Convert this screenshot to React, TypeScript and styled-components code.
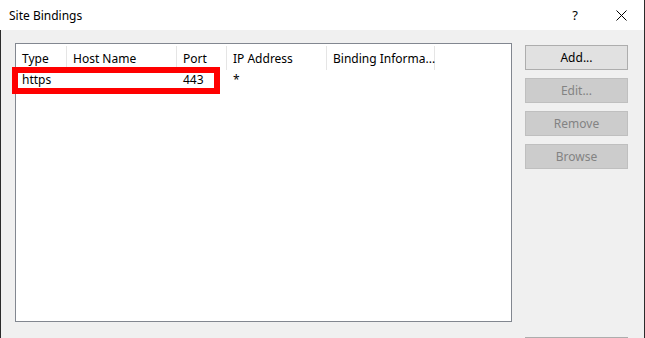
import React from 'react';
import styled, { createGlobalStyle } from 'styled-components';

const GlobalStyle = createGlobalStyle`
  html, body {
    margin: 0;
    padding: 0;
    background: #f0f0f0;
  }
  body {
    font-family: "Noto Sans", "Open Sans", sans-serif;
    font-size: 12px;
    color: #000;
  }
`;

const Window = styled('div')`
  display: flex;
  flex-direction: column;
  width: 644px;
  height: 338px;
  border-right: 1px solid #2b2b2b;
  overflow: hidden;
  background-color: #f0f0f0;
`;

const TitleBar = styled('header')`
  display: flex;
  align-items: center;
  flex: 0 0 30px;
  padding-left: 9px;
  background-color: white;
`;

const Title = styled('span')`
  flex: 1;
  font-size: 12px;
`;

const TitleButton = styled('div')`
  display: flex;
  align-items: center;
  justify-content: center;
  width: 46px;
  height: 30px;
  font-size: 13px;
`;

const Body = styled('section')`
  display: flex;
  align-items: flex-start;
  gap: 13px;
  flex: 1;
  padding: 13px 15px 0 14px;
  border-left: 1px solid #2b2b2b;
`;

const ListBox = styled('div')`
  width: 495px;
  height: 277px;
  flex: 0 0 auto;
  border: 1px solid #828790;
  background-color: white;
`;

const HeaderRow = styled('div')`
  display: flex;
  height: 26px;
`;

const HeaderCell = styled('div')<{ w: number }>`
  display: flex;
  align-items: center;
  box-sizing: border-box;
  width: ${p => p.w}px;
  height: 24px;
  margin-top: 2px;
  padding-left: 6px;
  border-right: 1px solid #e5e5e5;
  white-space: nowrap;
`;

const Row = styled('div')`
  position: relative;
  display: flex;
  height: 17px;
  margin-top: 1px;
`;

const Cell = styled('div')<{ w: number }>`
  display: flex;
  align-items: center;
  box-sizing: border-box;
  width: ${p => p.w}px;
  padding-left: 6px;
  white-space: nowrap;
`;

const Highlight = styled('div')`
  position: absolute;
  left: -4px;
  top: -4px;
  width: 208px;
  height: 27px;
  box-sizing: border-box;
  border: 6px solid #ff0000;
  pointer-events: none;
`;

const ButtonColumn = styled('div')`
  display: flex;
  flex-direction: column;
  gap: 8px;
  height: 317px;
  margin-top: 2px;
`;

const Button = styled('button')<{ disabled?: boolean }>`
  box-sizing: border-box;
  width: 103px;
  height: 25px;
  padding: 0;
  font-family: inherit;
  font-size: 12px;
  border: 1px solid ${p => (p.disabled ? '#bfbfbf' : '#adadad')};
  background-color: ${p => (p.disabled ? '#cccccc' : '#e1e1e1')};
  color: ${p => (p.disabled ? '#838383' : '#000')};
`;

// only its top edge shows at the bottom of the window
const BottomButton = styled(Button)`
  margin-top: auto;
`;

const columns = [
  { name: 'Type', w: 51 },
  { name: 'Host Name', w: 110 },
  { name: 'Port', w: 50 },
  { name: 'IP Address', w: 100 },
  { name: 'Binding Informa...', w: 108 },
];

const bindings = [['https', '', '443', '*', '']];

function CloseIcon() {
  return (
    <svg width="11" height="11" viewBox="0 0 11 11">
      <path d="M0.5 0.5 L10.5 10.5 M10.5 0.5 L0.5 10.5" stroke="#000" strokeWidth="1" fill="none" />
    </svg>
  );
}

export default function App() {
  return (
    <>
      <GlobalStyle />
      <Window>
        <TitleBar>
          <Title>Site Bindings</Title>
          <TitleButton>?</TitleButton>
          <TitleButton><CloseIcon /></TitleButton>
        </TitleBar>
        <Body>
          <ListBox>
            <HeaderRow>
              {columns.map(c => (
                <HeaderCell key={c.name} w={c.w}>{c.name}</HeaderCell>
              ))}
            </HeaderRow>
            {bindings.map((b, i) => (
              <Row key={i}>
                {b.map((v, j) => (
                  <Cell key={j} w={columns[j].w}>{v}</Cell>
                ))}
                <Highlight />
              </Row>
            ))}
          </ListBox>
          <ButtonColumn>
            <Button>Add...</Button>
            <Button disabled>Edit...</Button>
            <Button disabled>Remove</Button>
            <Button disabled>Browse</Button>
            <BottomButton aria-label="Close" />
          </ButtonColumn>
        </Body>
      </Window>
    </>
  );
}
